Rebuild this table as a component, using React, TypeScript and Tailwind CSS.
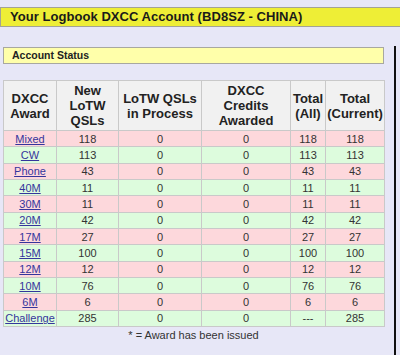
import React from "react";

type Row = { award: string; newq: string; proc: string; cred: string; all: string; cur: string };

const rows: Row[] = [
  { award: "Mixed", newq: "118", proc: "0", cred: "0", all: "118", cur: "118" },
  { award: "CW", newq: "113", proc: "0", cred: "0", all: "113", cur: "113" },
  { award: "Phone", newq: "43", proc: "0", cred: "0", all: "43", cur: "43" },
  { award: "40M", newq: "11", proc: "0", cred: "0", all: "11", cur: "11" },
  { award: "30M", newq: "11", proc: "0", cred: "0", all: "11", cur: "11" },
  { award: "20M", newq: "42", proc: "0", cred: "0", all: "42", cur: "42" },
  { award: "17M", newq: "27", proc: "0", cred: "0", all: "27", cur: "27" },
  { award: "15M", newq: "100", proc: "0", cred: "0", all: "100", cur: "100" },
  { award: "12M", newq: "12", proc: "0", cred: "0", all: "12", cur: "12" },
  { award: "10M", newq: "76", proc: "0", cred: "0", all: "76", cur: "76" },
  { award: "6M", newq: "6", proc: "0", cred: "0", all: "6", cur: "6" },
  { award: "Challenge", newq: "285", proc: "0", cred: "0", all: "---", cur: "285" },
];

const th = "border border-[#c9c9c9] bg-[#f1f1f1] font-bold text-[13px] leading-[15px] text-[#222] text-center align-middle px-0";
const td = "border border-[#c9c9c9] text-center align-middle p-0 text-[11px] leading-[14px] text-[#333]";

export default function App() {
  return (
    <div
      className="w-[400px] h-[355px] overflow-hidden bg-[#e7e7f7] pt-[7px]"
      style={{ fontFamily: '"Liberation Sans", Arial, sans-serif' }}
    >
      <div className="w-[420px] h-[20px] bg-[#eeee36] border border-[#a3a394] flex items-center pl-[9px]">
        <span className="font-bold text-[13px] text-[#1a1a1a] tracking-[0.05px]">
          Your Logbook DXCC Account (BD8SZ - CHINA)
        </span>
      </div>
      <div className="flex mt-[19px] h-[310px]">
        <div className="ml-[3px] w-[381px] pt-[1px] flex flex-col">
          <div className="h-[17px] bg-[#ffffaa] border border-[#a8a8a0] flex items-center pl-[8px]">
            <span className="font-bold text-[10.5px] text-[#222]">Account Status</span>
          </div>
          <table className="mt-[16px] w-[381px] border-collapse table-fixed">
            <colgroup>
              <col className="w-[53px]" />
              <col className="w-[62px]" />
              <col className="w-[83px]" />
              <col className="w-[89px]" />
              <col className="w-[35px]" />
              <col className="w-[59px]" />
            </colgroup>
            <thead>
              <tr className="h-[50px]">
                <th className={th}>DXCC<br />Award</th>
                <th className={th}>New<br />LoTW<br />QSLs</th>
                <th className={th}>LoTW QSLs<br />in Process</th>
                <th className={th}>DXCC<br />Credits<br />Awarded</th>
                <th className={th}>Total<br />(All)</th>
                <th className={th}>Total<br />(Current)</th>
              </tr>
            </thead>
            <tbody>
              {rows.map((r, i) => (
                <tr key={r.award} className={i % 2 === 0 ? "h-[16.33px] bg-[#fdd8dc]" : "h-[16.33px] bg-[#ddfcdd]"}>
                  <td className={td}>
                    <a href="#" className="text-[#35359c] underline">{r.award}</a>
                  </td>
                  <td className={td}>{r.newq}</td>
                  <td className={td}>{r.proc}</td>
                  <td className={td}>{r.cred}</td>
                  <td className={td}>{r.all}</td>
                  <td className={td}>{r.cur}</td>
                </tr>
              ))}
            </tbody>
          </table>
          <div className="text-center text-[11px] leading-[14px] text-[#333] mt-[1px]">* = Award has been issued</div>
        </div>
        <div className="ml-[10px] flex-1 border-l-2 border-[#111]" />
      </div>
    </div>
  );
}
